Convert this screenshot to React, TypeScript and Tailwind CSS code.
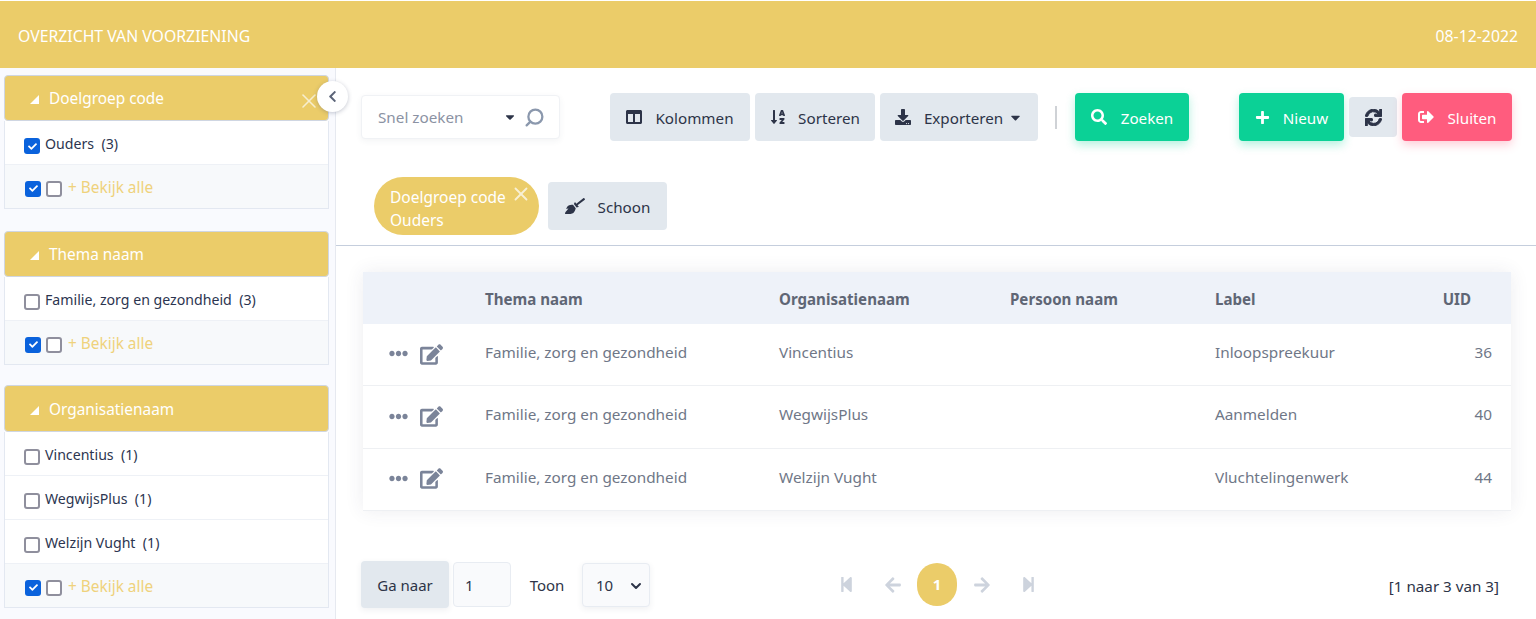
import React from "react";
import {
  FaColumns, FaSortAlphaDown, FaDownload, FaSearch, FaPlus, FaSync, FaSignOutAlt, FaBroom, FaEdit,
  FaEllipsisH, FaStepBackward, FaStepForward, FaArrowLeft, FaArrowRight, FaChevronLeft, FaCaretDown, FaCheck,
} from "react-icons/fa";
import { Search, ChevronDown, X } from "lucide-react";

const Box = ({ checked }: { checked?: boolean }) =>
  checked ? (
    <span className="flex w-4 h-4 shrink-0 items-center justify-center rounded-[3px] bg-[#0a62dc] text-white">
      <FaCheck size={9} />
    </span>
  ) : (
    <span className="block w-4 h-4 shrink-0 rounded-[3px] border-2 border-[#8f8f9d] bg-white" />
  );

const Row = ({ label, count, checked }: { label: string; count: number; checked?: boolean }) => (
  <div className="flex h-[44px] items-center pl-[19px] pt-[4px] border-b border-[#eef1f6] bg-white text-[14.15px] text-[#2c3550]">
    <span className="mt-[3px]"><Box checked={checked} /></span>
    <span className="ml-[5px] -mt-[2px] whitespace-pre">{label}  ({count})</span>
  </div>
);

const Facet = ({ title, close, tall, children, className }: { title: string; close?: boolean; tall?: boolean; children: React.ReactNode; className?: string }) => (
  <section className={className}>
    <div className={`flex ${tall ? "h-[47px]" : "h-[46px]"} items-center pl-[25px] rounded-[4px] bg-[#ebcc69] border border-[#cfd6e2] text-white text-[15.4px] relative`}>
      <span className="w-0 h-0 border-l-[9px] border-l-transparent border-b-[9px] border-b-white mt-[3px]" />
      <span className={`ml-[10px] ${tall ? "mt-[2px]" : "mt-px"}`}>{title}</span>
      {close && <X size={24} strokeWidth={1.6} className="absolute right-[7px] top-[13px] text-[#f6eecf]" />}
    </div>
    <div className="border-x border-[#e3e8f1]">
      {children}
      <div className="flex h-[44px] items-center pl-[20px] pt-[4px] bg-[#f7f9fb] border-b border-[#e3e8f1] text-[15.4px] text-[#efd27c]">
        <Box checked />
        <span className="ml-[5px]"><Box /></span>
        <span className="ml-[6px] -mt-[2px]">+ Bekijk alle</span>
      </div>
    </div>
  </section>
);

const Btn = ({ icon, label, className, caret }: { icon: React.ReactNode; label: string; className: string; caret?: boolean }) => (
  <button className={`flex h-[48px] items-center rounded-[4px] text-[15.2px] ${className}`}>
    {icon}
    <span className="mt-[2px]">{label}</span>
    {caret && <FaCaretDown size={15} className="ml-[5px]" />}
  </button>
);

const rows = [
  ["Vincentius", "Inloopspreekuur", "36"],
  ["WegwijsPlus", "Aanmelden", "40"],
  ["Welzijn Vught", "Vluchtelingenwerk", "44"],
];
const cols = "grid grid-cols-[122px_294px_231px_205px_1fr] items-center";

export default function App() {
  return (
    <div className="h-[619px] w-[1536px] overflow-hidden bg-white font-['Noto_Sans','Open_Sans',sans-serif]">
      <header className="mt-px flex h-[67px] items-center justify-between bg-[#ebcc69] pl-[18px] pr-[18px] pt-[4px] text-[15.8px] text-white">
        <span>OVERZICHT VAN VOORZIENING</span>
        <span>08-12-2022</span>
      </header>
      <div className="flex h-[551px]">
        <aside className="relative w-[336px] shrink-0 border-r border-[#e6e9f0] bg-[#f9fafe] pl-[4px] pr-[6px] pt-[7px]">
          <Facet title="Doelgroep code" close>
            <Row label="Ouders" count={3} checked />
          </Facet>
          <Facet title="Thema naam" className="mt-[22px]">
            <Row label="Familie, zorg en gezondheid" count={3} />
          </Facet>
          <Facet title="Organisatienaam" tall className="mt-[20px]">
            <Row label="Vincentius" count={1} />
            <Row label="WegwijsPlus" count={1} />
            <Row label="Welzijn Vught" count={1} />
          </Facet>
          <button className="absolute left-[317px] top-[13px] flex h-[31px] w-[31px] items-center justify-center rounded-full bg-white text-[#5b6478] shadow-[0_1px_4px_rgba(60,70,100,0.3)]">
            <FaChevronLeft size={13} />
          </button>
        </aside>
        <main className="min-w-0 flex-1">
          <div className="flex items-center pl-[25px] pr-[24px] pt-[25px]">
            <div className="flex h-[44px] w-[199px] items-center rounded-[4px] border border-[#f0f2f5] bg-white pl-[16px] pr-[14px] text-[15.25px] text-[#8b92a3] shadow-[0_2px_6px_rgba(50,60,90,0.06)]">
              <span className="flex-1 whitespace-nowrap mt-px">Snel zoeken</span>
              <FaCaretDown size={14} className="text-[#2d3448]" />
              <Search size={21} strokeWidth={2.6} className="ml-[7px] -scale-x-100 text-[#8b98ad]" />
            </div>
            <Btn className="ml-[50px] w-[140px] justify-center bg-[#e2e8ee] text-[#2d3448]" icon={<FaColumns size={16} className="mr-[13px]" />} label="Kolommen" />
            <Btn className="ml-[5px] w-[120px] justify-center bg-[#e2e8ee] text-[#2d3448]" icon={<FaSortAlphaDown size={16} className="mr-[12px]" />} label="Sorteren" />
            <Btn className="ml-[5px] w-[158px] justify-center bg-[#e2e8ee] text-[#2d3448]" icon={<FaDownload size={16} className="mr-[13px]" />} label="Exporteren" caret />
            <span className="ml-[17px] h-[23px] w-[2px] bg-[#cfd2d6]" />
            <Btn className="ml-[18px] w-[114px] justify-center bg-[#0bd196] text-white shadow-[0_4px_10px_rgba(11,209,150,0.3)]" icon={<FaSearch size={16} className="mr-[14px]" />} label="Zoeken" />
            <Btn className="ml-[50px] w-[105px] justify-center bg-[#0bd196] text-white shadow-[0_4px_10px_rgba(11,209,150,0.3)]" icon={<FaPlus size={15} className="mr-[13px]" />} label="Nieuw" />
            <button className="ml-[5px] flex h-[40px] w-[48px] items-center justify-center rounded-[4px] bg-[#e2e8ee] text-[#2d3448]"><FaSync size={17} stroke="currentColor" strokeWidth={30} /></button>
            <Btn className="ml-[5px] w-[110px] justify-center bg-[#ff5c7e] text-white shadow-[0_4px_10px_rgba(255,92,126,0.3)]" icon={<FaSignOutAlt size={16} className="mr-[14px]" />} label="Sluiten" />
          </div>
          <div className="flex h-[105px] items-end border-b border-[#c5cedd] pl-[38px] pb-[10px]">
            <div className="relative h-[58px] w-[165px] rounded-[29px] bg-[#ebcc69] pl-[16px] pt-[9px] text-[15.5px] leading-[23px] text-white">
              <div>Doelgroep code</div>
              <div>Ouders</div>
              <X size={22} strokeWidth={2} className="absolute right-[7px] top-[6px] text-[#f8f0d4]" />
            </div>
            <Btn className="ml-[9px] mb-[5px] w-[119px] justify-center bg-[#e2e8ee] text-[#2d3448]" icon={<FaBroom size={20} className="mr-[13px]" />} label="Schoon" />
          </div>
          <div className="ml-[27px] mr-[25px] mt-[26px] text-[15.3px] text-[#6f7787] shadow-[0_0_18px_rgba(50,60,90,0.09)]">
            <div className={`${cols} h-[52px] pt-[2px] bg-[#eef2f9] font-bold text-[15.1px] text-[#5f6675]`}>
              <span />
              <span>Thema naam</span>
              <span>Organisatienaam</span>
              <span>Persoon naam</span>
              <div className="flex justify-between pr-[40px]"><span>Label</span><span>UID</span></div>
            </div>
            {rows.map(([org, label, uid]) => (
              <div key={uid} className={`${cols} h-[62.4px] pb-[5px] border-b border-[#eef0f3] bg-white`}>
                <div className="flex items-center pl-[26px] mt-[3px] text-[#7b8499]">
                  <FaEllipsisH size={19} />
                  <FaEdit size={23} className="ml-[12px] mt-[1px]" />
                </div>
                <span>Familie, zorg en gezondheid</span>
                <span>{org}</span>
                <span />
                <div className="flex justify-between pr-[19px]"><span>{label}</span><span>{uid}</span></div>
              </div>
            ))}
          </div>
          <div className="mt-[50px] flex items-center pl-[25px] pr-[37px] text-[15px] text-[#2d3448]">
            <span className="flex h-[47px] w-[88px] items-center justify-center rounded-[4px] bg-[#e2e8ee] pt-[2px] shadow-[0_2px_6px_rgba(50,60,90,0.08)]">Ga naar</span>
            <span className="ml-[4px] flex h-[45px] w-[58px] items-center rounded-[4px] border border-[#e8ecf2] bg-[#f9fafc] pl-[11px] pt-[2px]">1</span>
            <span className="ml-[5px] flex h-[22px] w-[62px] items-center justify-center rounded-[3px] bg-white pt-[2px]">Toon</span>
            <span className="ml-[4px] flex h-[44px] w-[68px] items-center justify-between rounded-[4px] border border-[#e8ecf2] bg-[#f9fafc] pl-[13px] pr-[5px] pt-[2px] shadow-[0_2px_6px_rgba(50,60,90,0.08)]">10 <ChevronDown size={16} strokeWidth={3} /></span>
            <div className="ml-[188px] flex items-center text-[#cdd3dd]">
              <FaStepBackward size={17} />
              <FaArrowLeft size={18} className="ml-[29px]" />
              <span className="ml-[15px] flex h-[43px] w-[40px] items-center justify-center rounded-full bg-[#ebcc69] font-bold text-white">1</span>
              <FaArrowRight size={18} className="ml-[16px]" />
              <FaStepForward size={17} className="ml-[29px]" />
            </div>
            <span className="ml-auto mt-[4px] text-[15.2px] text-[#2d3448] whitespace-nowrap">[1 naar 3 van 3]</span>
          </div>
        </main>
      </div>
    </div>
  );
}
